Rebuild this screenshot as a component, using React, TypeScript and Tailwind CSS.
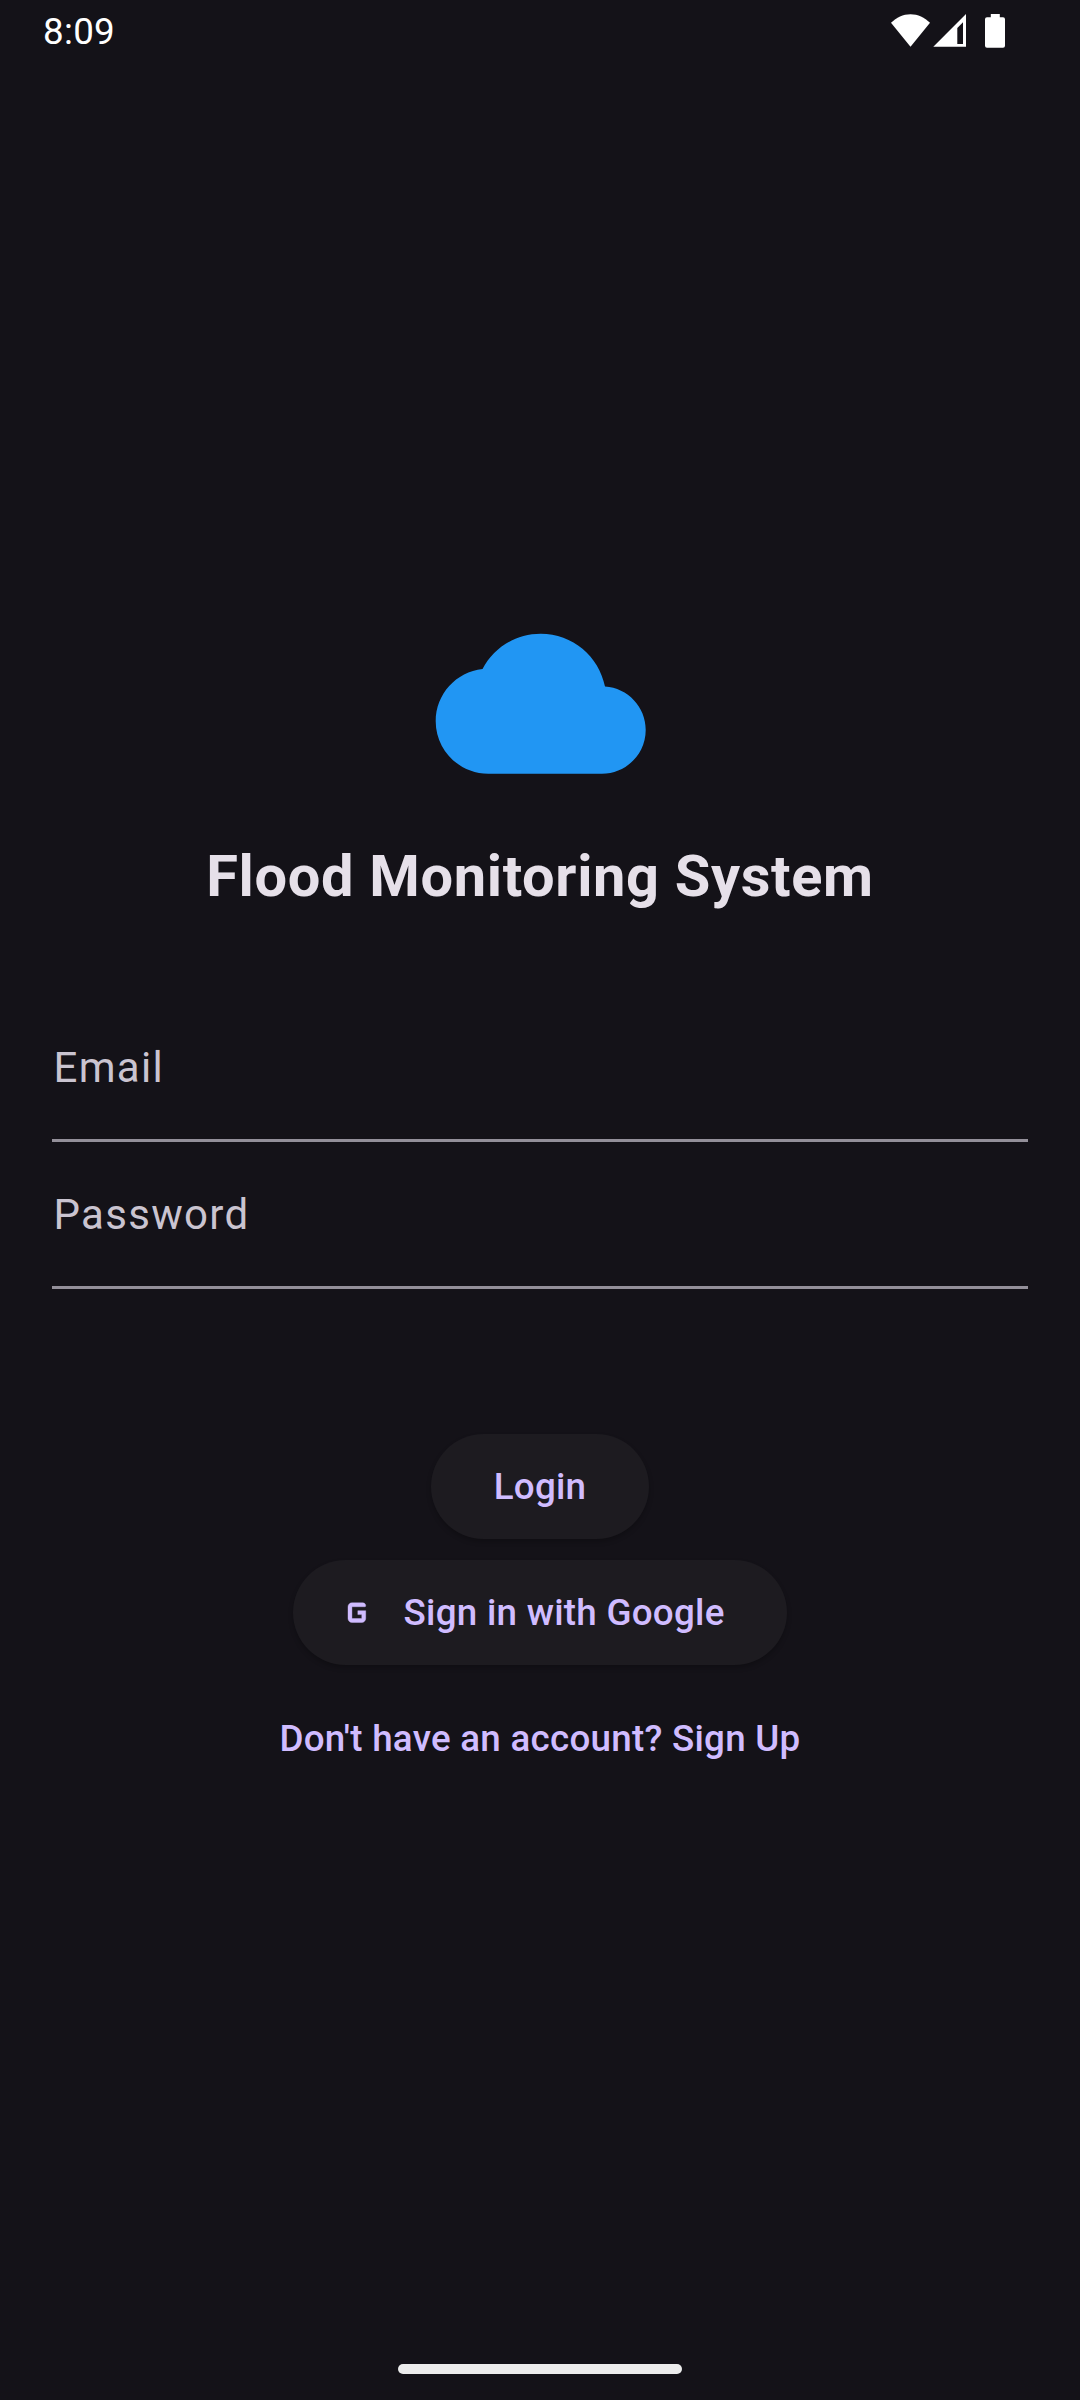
import React from "react";

function StatusBar() {
  return (
    <header className="flex h-[63px] shrink-0 items-start justify-between pl-[43px] text-white">
      <span className="mt-[10px] text-[36.75px] leading-[43px] tracking-[0.3px]">8:09</span>
      <svg className="mt-[8px] mr-[69px] h-[44px] w-[125px]" viewBox="886 8 125 44" fill="currentColor">
        <path d="M910.5 46.7 891 22.8C896.5 17.4 903 14.2 910.5 14.2S924.500 17.400 930 22.800Z" />
        <path fillRule="evenodd" d="M966 14v32.700H933.300ZM963 22.300 957.300 28V44H963Z" />
        <path d="M990.800 14h9v3.200h3.200q2 0 2 2v26.600q0 2-2 2h-16q-2 0-2-2V19.200q0-2 2-2h3.800Z" />
      </svg>
    </header>
  );
}

function Field({ label, type }: { label: string; type: string }) {
  return (
    <label className="relative flex h-[147px] items-center border-b-[3px] border-[#938f99] pl-[1.500px]">
      <span className="text-[42px] leading-[63px] tracking-[1.3125px] text-[#cac4d0]">{label}</span>
      <input type={type} aria-label={label} className="absolute inset-0 bg-transparent outline-none" />
    </label>
  );
}

const BUTTON =
  "flex h-[105px] items-center rounded-full bg-[#1d1b20] pt-px text-[36.75px] font-medium tracking-[0.2625px] text-[#d0bcff] shadow-[0_3px_5px_rgba(0,0,0,0.22)]";

export default function App() {
  return (
    <div className="flex h-[2400px] w-[1080px] flex-col overflow-hidden bg-[#141218] font-['Roboto',sans-serif]">
      <StatusBar />
      <main className="flex flex-1 flex-col items-center px-[52px] pt-[535px]">
        <svg className="h-[210px] w-[210px] shrink-0 overflow-visible" viewBox="-0.08 -0.08 24 24" fill="#2196f3">
          <path d="M19.350 10.040C18.670 6.590 15.640 4 12 4 9.110 4 6.600 5.640 5.350 8.040 2.340 8.360 0 10.910 0 14c0 3.310 2.690 6 6 6h13c2.760 0 5-2.240 5-5 0-2.640-2.050-4.780-4.650-4.960z" />
        </svg>
        <h1 className="mt-[29px] h-[78px] text-[57.75px] leading-[78px] font-bold tracking-[0.66px] whitespace-nowrap text-[#e6e0e9]">
          Flood Monitoring System
        </h1>
        <form className="mt-[80px] w-full" onSubmit={(e) => e.preventDefault()}>
          <Field label="Email" type="email" />
          <Field label="Password" type="password" />
        </form>
        <button className={`mt-[144.500px] px-[63px] ${BUTTON}`}>Login</button>
        <button className={`mt-[21px] gap-[21px] pr-[63px] pl-[42px] ${BUTTON}`}>
          <svg className="size-[47.25px]" viewBox="0.4 0 24 24" fill="currentColor" stroke="currentColor" strokeWidth="0.2">
            <path d="M12 11v2h2v2H9V9h6.500c.3 0 .5-.2.5-.5 0-.9-.7-1.500-1.500-1.500H9c-1.100 0-2 .9-2 2v6c0 1.100.9 2 2 2h5c1.100 0 2-.9 2-2v-4z" />
          </svg>
          <span className="translate-x-[0.5px]">Sign in with Google</span>
        </button>
        <button className="mt-[21px] h-[105px] pt-px text-[36.75px] font-medium tracking-[0.2625px] whitespace-nowrap text-[#d0bcff]">
          Don't have an account? Sign Up
        </button>
      </main>
      <footer className="flex h-[36px] shrink-0 justify-center">
        <div className="h-[10px] w-[284px] rounded-full bg-[#ececec]" />
      </footer>
    </div>
  );
}
